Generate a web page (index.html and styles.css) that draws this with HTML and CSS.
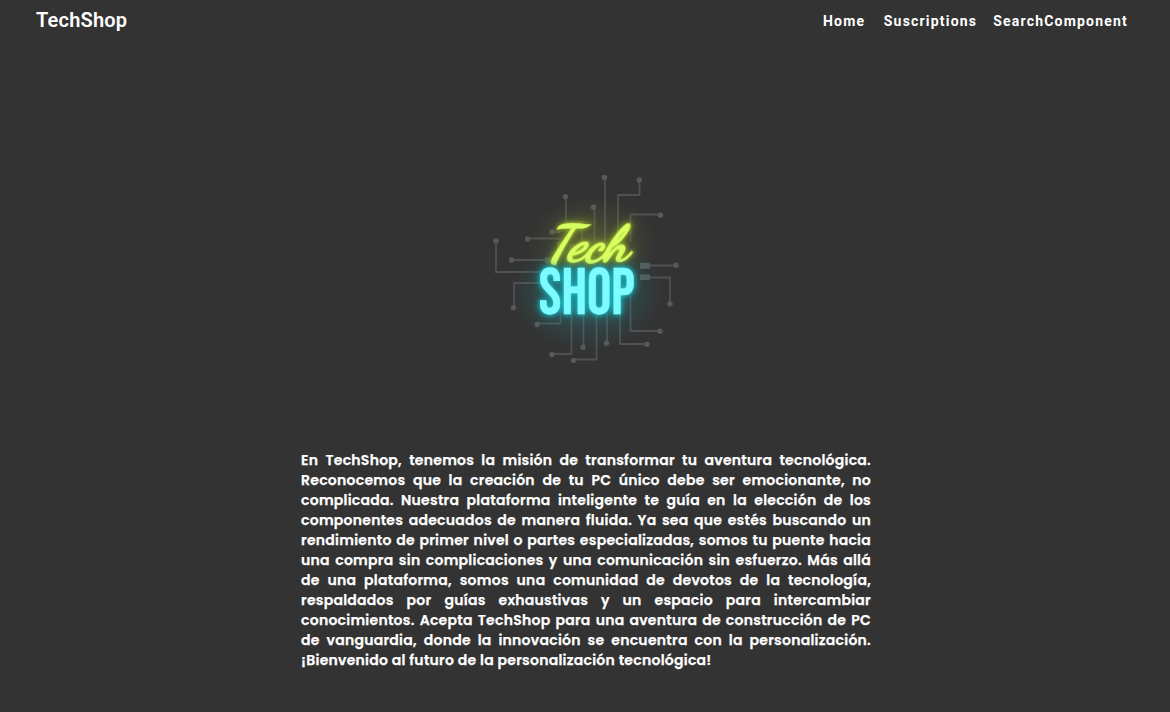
FILE: index.html
```html
<!DOCTYPE html>
<html lang="es">
<head>
<meta charset="utf-8">
<title>TechShop</title>
<link rel="stylesheet" href="styles.css">
</head>
<body>
<header class="navbar">
  <a class="brand">TechShop</a>
  <nav class="links">
    <a class="link home">Home</a>
    <a class="link subs">Suscriptions</a>
    <a class="link search">SearchComponent</a>
  </nav>
</header>
<main class="hero">
  <svg class="logo" viewBox="485 165 200 206" role="img" aria-label="Tech Shop">
    <defs>
      <radialGradient id="haze"><stop offset="0" stop-color="#8b9a38" stop-opacity=".4"/><stop offset="1" stop-color="#667030" stop-opacity="0"/></radialGradient>
      <radialGradient id="mist"><stop offset="0" stop-color="#24a8b0" stop-opacity=".45"/><stop offset="1" stop-color="#278085" stop-opacity="0"/></radialGradient>
    </defs>
    <g class="traces">
      <path d="M566 197V222.500H582V248M552 232H560M527 238.500H560V248M512 260H548M496 241V272H545M514 308V283H545M605 178V242M639.500 180V195H618V240M660 214.500H630.500V242M594.500 207V242M648 265.500H676M648 277.500H670V304M660 331H630.500V288M647 344H620V308M607 343V308M573.500 359.500H596.500V308M583.500 347V308M552 354H571.500V308M537 323.500H560.500V308"/>
    </g>
    <g class="nodes">
      <circle cx="565.300" cy="196.800" r="2.700"/><circle cx="552" cy="232" r="2.700"/><circle cx="527.500" cy="239" r="2.700"/><circle cx="511.500" cy="260" r="2.700"/><circle cx="496" cy="241" r="2.700"/><circle cx="513.500" cy="307.700" r="2.700"/><circle cx="604.500" cy="177.500" r="2.700"/><circle cx="639.300" cy="180" r="2.700"/><circle cx="660.500" cy="215.300" r="2.700"/><circle cx="593.500" cy="207.300" r="2.700"/><circle cx="676" cy="265.300" r="2.700"/><circle cx="670" cy="304" r="2.700"/><circle cx="660" cy="331.300" r="2.700"/><circle cx="647" cy="344.200" r="2.700"/><circle cx="606.500" cy="343.300" r="2.700"/><circle cx="573.500" cy="360.500" r="2.700"/><circle cx="583" cy="347.300" r="2.700"/><circle cx="552" cy="354.500" r="2.700"/><circle cx="537" cy="324.500" r="2.700"/>
      <path d="M557 242h5v8h-5zM569 244h6v8h-6zM545 257.500h7v6h-7z"/>
    </g>
    <ellipse cx="593" cy="244" rx="66" ry="48" fill="url(#haze)"/>
    <ellipse cx="587" cy="293" rx="78" ry="58" fill="url(#mist)"/>
    <path class="pads" d="M640 262.700h10v6h-10zM640 274.500h10v5.500h-10z"/>
    <text class="script" transform="translate(546.500 260) skewX(-14)" textLength="82" lengthAdjust="spacingAndGlyphs">Tech</text>
    <text class="block" x="538.800" y="314" textLength="96" lengthAdjust="spacingAndGlyphs">SHOP</text>
  </svg>
  <p class="mission">En TechShop, tenemos la misión de transformar tu aventura tecnológica. Reconocemos que la creación de tu PC único debe ser emocionante, no complicada. Nuestra plataforma inteligente te guía en la elección de los componentes adecuados de manera fluida. Ya sea que estés buscando un rendimiento de primer nivel o partes especializadas, somos tu puente hacia una compra sin complicaciones y una comunicación sin esfuerzo. Más allá de una plataforma, somos una comunidad de devotos de la tecnología, respaldados por guías exhaustivas y un espacio para intercambiar conocimientos. Acepta TechShop para una aventura de construcción de PC de vanguardia, donde la innovación se encuentra con la personalización. ¡Bienvenido al futuro de la personalización tecnológica!</p>
</main>
</body>
</html>
```
FILE: styles.css
```css
body {
  margin: 0;
  min-height: 712px;
  background: #333;
  color: #fff;
  font-family: Roboto, sans-serif;
}
.navbar {
  display: flex;
  justify-content: space-between;
  align-items: center;
  height: 42px;
  padding: 0 42px 0 36px;
}
.brand {
  font-size: 20px;
  font-weight: 600;
  letter-spacing: .2px;
  line-height: 40px;
  padding-bottom: 2px;
}
.links {
  display: flex;
}
.link {
  font-size: 14px;
  font-weight: 700;
  letter-spacing: 1.2px;
}
.subs {
  margin: 0 16px 0 18.500px;
}
.hero {
  display: flex;
  flex-direction: column;
  align-items: center;
  padding-top: 123px;
}
.logo {
  width: 200px;
  height: 206px;
}
.traces {
  fill: none;
  stroke: #505050;
  stroke-width: 1.8;
}
.nodes {
  fill: #585858;
}
.pads {
  fill: #50605f;
}
.script {
  font: 400 50px "Dancing Script", cursive;
  fill: #d8ff61;
  stroke: #d8ff61;
  stroke-width: 1.8;
  filter: drop-shadow(0 0 2px #a9c928) drop-shadow(0 0 5px #7d9125);
}
.block {
  font: 400 65.5px "Bebas Neue", Oswald, sans-serif;
  fill: #7dfbff;
  stroke: #7dfbff;
  stroke-width: .3;
  filter: drop-shadow(0 0 2px #20cbd6) drop-shadow(0 0 5px #169ba5);
}
.mission {
  width: 570px;
  margin: 79px 0 0 2px;
  font: 600 14px/20px Poppins, Inter, sans-serif;
  letter-spacing: .26px;
  text-align: justify;
  -webkit-text-stroke: .25px #fff;
}
```
